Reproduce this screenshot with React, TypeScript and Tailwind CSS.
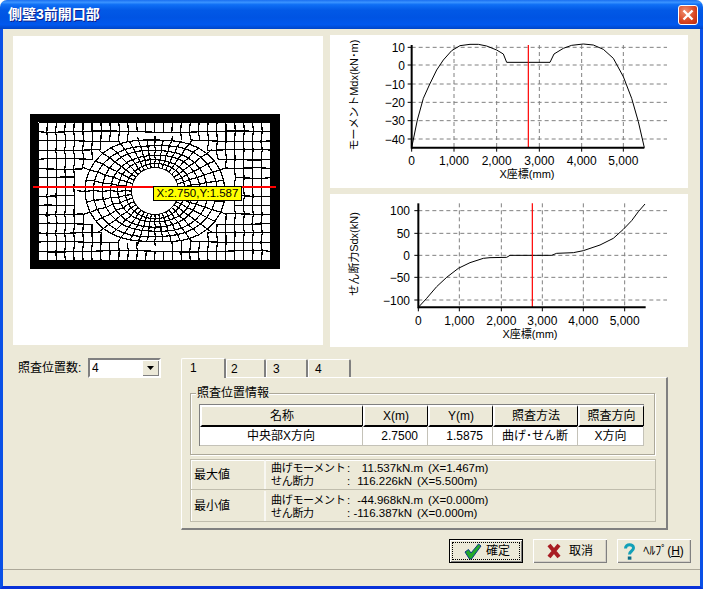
const jit = (a: number, b: number, k: number) => Math.sin(a * 12.9898 + b * 78.233 + k) * 0.7;

const CX = 155;
const CY = 191;
const inEllipse = (x: number, y: number) => ((x - CX) / 80) ** 2 + ((y - CY) / 57) ** 2 < 1;

const buildMesh = () => {
  const segs: string[] = [];
  const cols = 26;
  const rows = 15;
  const node = (i: number, j: number): [number, number] => {
    const e = i === 0 || j === 0 || i === cols || j === rows ? 0 : 1;
    return [38.5 + (i * 232) / cols + e * jit(i, j, 1), 122.5 + (j * 138) / rows + e * jit(i, j, 5)];
  };
  for (let i = 0; i <= cols; i++) {
    for (let j = 0; j <= rows; j++) {
      const a = node(i, j);
      if (i < cols) {
        const b = node(i + 1, j);
        if (!inEllipse((a[0] + b[0]) / 2, (a[1] + b[1]) / 2)) segs.push(`M${a[0]} ${a[1]}L${b[0]} ${b[1]}`);
      }
      if (j < rows) {
        const b = node(i, j + 1);
        if (!inEllipse((a[0] + b[0]) / 2, (a[1] + b[1]) / 2)) segs.push(`M${a[0]} ${a[1]}L${b[0]} ${b[1]}`);
      }
    }
  }
  const spokes = 40;
  const rings = [0, 0.12, 0.25, 0.39, 0.54, 0.7, 0.86, 1];
  const polar = (s: number, r: number): [number, number] => {
    const th = (s / spokes) * Math.PI * 2;
    const out = Math.hypot(78 * Math.cos(th), 55 * Math.sin(th));
    const rad = 23.5 + (out - 23.5) * rings[r];
    const e = r === 0 ? 0 : 0.7;
    return [CX + rad * Math.cos(th) + e * jit(s, r, 2), CY + rad * Math.sin(th) + e * jit(s, r, 7)];
  };
  for (let s = 0; s < spokes; s++) {
    for (let r = 0; r < rings.length - 1; r++) {
      const a = polar(s, r);
      const b = polar(s + 1, r);
      segs.push(`M${a[0]} ${a[1]}L${b[0]} ${b[1]}`);
      // outer ring gets every other spoke so it meets the square cells without clumping
      if (r < rings.length - 2 || s % 2 === 0) {
        const c = polar(s, r + 1);
        segs.push(`M${a[0]} ${a[1]}L${c[0]} ${c[1]}`);
      }
    }
  }
  return segs.join("");
};

const MESH = buildMesh();

const MeshView = () => (
  <svg width="310" height="309" viewBox="13 36 310 309">
    <rect x="30" y="114" width="250" height="155" fill="#000" />
    <rect x="38" y="122" width="233" height="138" fill="#fff" />
    <path d={MESH} fill="none" stroke="#000" strokeWidth="1.2" shapeRendering="crispEdges" />
    <circle cx={CX} cy={CY} r="23" fill="#fff" />
    <rect x="33" y="186" width="243" height="2" fill="#ff0000" />
  </svg>
);

type ChartProps = {
  top: number;
  base: number;
  axisX: number;
  axisY: number;
  axisTop: number;
  axisEnd: number;
  xTicks: number[];
  yTicks: [number, string][];
  redX: number;
  curve: number[][];
  yTitle: string;
  yTitleX: number;
  yLabelX: number;
  xTitleX: number;
  xLabelY: number;
  xTitleY: number;
};

const XLABELS = ["0", "1,000", "2,000", "3,000", "4,000", "5,000"];

// positions are read from the 3x crops, so zx/zy are crop pixels
const Chart = (p: ChartProps) => {
  const X = (zx: number) => 330 + zx / 3;
  const Y = (zy: number) => p.base + zy / 3;
  return (
    <svg width="358" height="153" viewBox={`330 ${p.top} 358 153`} fontSize="12" className="block">
      {p.xTicks.slice(1).map((t) => (
        <line key={t} x1={X(t)} x2={X(t)} y1={Y(p.axisTop)} y2={Y(p.axisY)} stroke="#808080" strokeDasharray="4 3" />
      ))}
      {p.yTicks.map(([t]) => (
        <line key={t} x1={X(p.axisX)} x2={667} y1={Y(t)} y2={Y(t)} stroke="#808080" strokeDasharray="4 3" />
      ))}
      <polyline
        points={p.curve.map(([x, y]) => `${X(x)},${Y(y)}`).join(" ")}
        fill="none"
        stroke="#000"
        strokeWidth="1"
      />
      <line x1={X(p.redX)} x2={X(p.redX)} y1={Y(p.axisTop)} y2={Y(p.axisY)} stroke="#ff0000" strokeWidth="1.2" />
      <line x1={X(p.axisX)} x2={X(p.axisX)} y1={Y(p.axisTop)} y2={Y(p.axisY) + 1} stroke="#000" strokeWidth="2" />
      <line x1={X(p.axisX)} x2={X(p.axisEnd)} y1={Y(p.axisY)} y2={Y(p.axisY)} stroke="#000" strokeWidth="2" />
      {p.yTicks.map(([t, label]) => (
        <g key={label}>
          <line x1={X(p.axisX) - 4} x2={X(p.axisX)} y1={Y(t)} y2={Y(t)} stroke="#000" />
          <text x={p.yLabelX} y={Y(t) + 4.5} textAnchor="end">
            {label}
          </text>
        </g>
      ))}
      {p.xTicks.map((t, i) => (
        <g key={t}>
          <line x1={X(t)} x2={X(t)} y1={Y(p.axisY)} y2={Y(p.axisY) + 4} stroke="#000" />
          <text x={X(t)} y={p.xLabelY} textAnchor="middle">
            {XLABELS[i]}
          </text>
        </g>
      ))}
      <text x={p.xTitleX} y={p.xTitleY} textAnchor="middle" fontSize="11">
        X座標(mm)
      </text>
      <text
        transform={`translate(${p.yTitleX} ${p.top + 60}) rotate(-90)`}
        textAnchor="middle"
        fontSize="11"
      >
        {p.yTitle}
      </text>
    </svg>
  );
};

const MOMENT = [
  [245, 353], [262, 270], [280, 205], [298, 165], [320, 120], [340, 90], [365, 62], [390, 47], [420, 43],
  [445, 43], [470, 48], [500, 60], [520, 72], [530, 97], [660, 97], [672, 72], [700, 55], [725, 46], [760, 42],
  [790, 45], [820, 58], [850, 85], [880, 140], [905, 205], [925, 275], [943, 353],
];

const SHEAR = [
  [265, 352], [290, 325], [320, 290], [350, 262], [385, 235], [420, 218], [460, 205], [480, 203], [530, 202],
  [540, 196], [665, 196], [680, 190], [730, 188], [760, 182], [810, 165], [850, 145], [880, 118], [905, 92],
  [925, 65], [945, 42],
];

const headCell =
  "flex items-center justify-center bg-[#ece9d8] border-t-2 border-l-2 border-t-white border-l-white border-b-2 border-r border-b-black border-r-black";
const bodyCell = "flex items-center border-r border-b border-[#c4c2b8] h-[20px]";

const ResultLine = ({ label, value, pos, short }: { label: string; value: string; pos: string; short?: boolean }) => (
  <div className="flex h-[13px] items-center text-[11.5px] leading-[13px] whitespace-nowrap">
    <span className="w-[75px] text-[11px] tracking-[-0.3px]">{label}</span>
    <span className="w-[5px] text-center">:</span>
    <span className={short ? "w-[61px] text-right" : "w-[72px] text-right"}>{value}</span>
    <span className="ml-[5px]">{pos}</span>
  </div>
);

const ResultRow = ({ title, children, className }: { title: string; children: React.ReactNode; className?: string }) => (
  <div className={`flex h-[31px] ${className ?? ""}`}>
    <div className="flex w-[75px] items-center pl-[3px] border-r-2 border-[#f8f7f2] text-[12px]">{title}</div>
    <div className="flex flex-col justify-center pl-[5px] pt-px">{children}</div>
  </div>
);

const DialogButton = ({ children, primary }: { children: React.ReactNode; primary?: boolean }) => (
  <button
    className={`flex h-[24px] w-[74px] items-center justify-center gap-[4px] bg-[#ece9d8] text-[12px] ${
      primary
        ? "border border-black shadow-[inset_1px_1px_0_#fff,inset_-1px_-1px_0_#808080] outline-1 outline-dotted outline-black -outline-offset-[4px]"
        : "shadow-[inset_1px_1px_0_#fff,inset_-1px_-1px_0_#808080,inset_-2px_-2px_0_#d4d0c8]"
    }`}
  >
    {children}
  </button>
);

export default function App() {
  return (
    <div className="flex h-[589px] w-[703px] flex-col overflow-hidden rounded-t-[7px] bg-[#ece9d8] font-['Liberation_Sans','Noto_Sans_CJK_JP',sans-serif] text-black">
      {/* title bar */}
      <div className="flex h-[29px] shrink-0 items-center justify-between bg-[linear-gradient(180deg,#1a6ff0_0%,#3a93ff_8%,#0f6ff5_16%,#0259e6_35%,#0054e3_60%,#0058ee_85%,#0045c8_100%)] pl-[8px] pr-[5px]">
        <span className="text-[14px] font-bold text-white [text-shadow:1px_1px_0_#0f1f89]">側壁3前開口部</span>
        <div className="flex h-[20px] w-[20px] items-center justify-center rounded-[3px] border border-white bg-[radial-gradient(circle_at_35%_30%,#f09070,#d8431f_60%,#b82a10)]">
          <svg width="12" height="12" viewBox="0 0 12 12">
            <path d="M1.5 1.5L10.5 10.5M10.5 1.5L1.5 10.5" stroke="#fff" strokeWidth="2.4" />
          </svg>
        </div>
      </div>

      {/* client area */}
      <div className="flex min-h-0 flex-1 flex-col border-x-[3px] border-b-[3px] border-x-[#0a50e6] border-b-[#0831d9]">
        <div className="flex gap-[7px] pl-[10px] pt-[6px]">
          <div className="relative mt-px h-[309px] w-[310px] bg-white">
            <MeshView />
            <div className="absolute left-[140px] top-[150px] flex h-[15px] w-[89px] items-center justify-center border border-black bg-[#ffff00] text-[11.5px] leading-none whitespace-nowrap">
              X:2.750,Y:1.587
            </div>
          </div>
          <div className="flex w-[358px] flex-col gap-[6px]">
            <div className="h-[153px] bg-white">
              <Chart
                top={35}
                base={30}
                axisX={245}
                axisY={353}
                axisTop={45}
                axisEnd={943}
                xTicks={[245, 372, 500, 628, 755, 880]}
                yTicks={[[52, "10"], [105, "0"], [162, "−10"], [217, "−20"], [272, "−30"], [327, "−40"]]}
                redX={595}
                curve={MOMENT}
                yTitle="モーメントMdx(kN･m)"
                yTitleX={358}
                yLabelX={405}
                xTitleX={527}
                xLabelY={165}
                xTitleY={178}
              />
            </div>
            <div className="h-[153px] bg-white">
              <Chart
                top={194}
                base={190}
                axisX={265}
                axisY={352}
                axisTop={40}
                axisEnd={947}
                xTicks={[265, 388, 514, 637, 760, 884]}
                yTicks={[[62, "100"], [130, "50"], [196, "0"], [262, "−50"], [330, "−100"]]}
                redX={607}
                curve={SHEAR}
                yTitle="せん断力Sdx(kN)"
                yTitleX={358}
                yLabelX={410}
                xTitleX={530}
                xLabelY={325}
                xTitleY={338}
              />
            </div>
          </div>
        </div>

        <div className="flex pt-[11px]">
          {/* check position count */}
          <div className="flex h-[20px] w-[178px] items-center pl-[15px] text-[12px]">
            <span className="w-[70px]">照査位置数:</span>
            <div className="flex h-[20px] w-[73px] items-center justify-between border-2 border-t-[#808080] border-l-[#808080] border-b-white border-r-white bg-white pl-[2px]">
              <span>4</span>
              <div className="flex h-[16px] w-[17px] items-center justify-center bg-[#ece9d8] shadow-[inset_1px_1px_0_#fff,inset_-1px_-1px_0_#808080]">
                <svg width="7" height="4" viewBox="0 0 7 4">
                  <path d="M0 0H7L3.5 4Z" fill="#000" />
                </svg>
              </div>
            </div>
          </div>

          {/* tabs */}
          <div className="flex w-[487px] flex-col">
            <div className="flex h-[19px] items-end text-[12px]">
              <div className="relative z-10 -mb-px flex h-[20px] w-[45px] items-start rounded-t-[2px] border-l border-r-2 border-t border-l-white border-r-[#808080] border-t-white bg-[#ece9d8] pl-[8px]">
                1
              </div>
              <div className="flex h-[18px] w-[40px] items-center rounded-t-[2px] border-l border-r-2 border-t border-l-white border-r-[#808080] border-t-white pl-[4px]">2</div>
              <div className="flex h-[18px] w-[42px] items-center rounded-t-[2px] border-l border-r-2 border-t border-l-white border-r-[#808080] border-t-white pl-[6px]">3</div>
              <div className="flex h-[18px] w-[43px] items-center rounded-t-[2px] border-l border-r-2 border-t border-l-white border-r-[#808080] border-t-white pl-[6px]">4</div>
            </div>
            <div className="h-[153px] border-l border-t border-l-white border-t-white border-b-2 border-r-2 border-b-[#808080] border-r-[#808080] pl-[8px] pt-[8px] text-[12px]">
              <fieldset className="h-[69px] w-[465px] border border-[#aca899] pl-[8px] shadow-[inset_1px_1px_0_#fff,1px_1px_0_#fff]">
                <legend className="ml-[-3px] h-[14px] bg-[#ece9d8] pl-px text-[12px] leading-[14px]">照査位置情報</legend>
                <div className="mt-[4px] w-[445px] border-l border-t border-[#808080]">
                  <div className="grid h-[21px] grid-cols-[163px_65px_65px_85px_66px]">
                    <div className={headCell}>名称</div>
                    <div className={headCell}>X(m)</div>
                    <div className={headCell}>Y(m)</div>
                    <div className={headCell}>照査方法</div>
                    <div className={headCell}>照査方向</div>
                  </div>
                  <div className="grid h-[20px] grid-cols-[163px_65px_65px_85px_66px] bg-white">
                    <div className={`${bodyCell} justify-center`}>中央部X方向</div>
                    <div className={`${bodyCell} justify-end pr-[9px]`}>2.7500</div>
                    <div className={`${bodyCell} justify-end pr-[9px]`}>1.5875</div>
                    <div className={`${bodyCell} justify-center`}>曲げ･せん断</div>
                    <div className={`${bodyCell} justify-center`}>X方向</div>
                  </div>
                </div>
              </fieldset>
              <div className="mt-[4px] flex h-[63px] w-[466px] flex-col gap-px border border-[#c0bdad] shadow-[inset_1px_1px_0_#fff]">
                <ResultRow title="最大値" className="border-b border-[#c0bdad]">
                  <ResultLine label="曲げモーメント" value="11.537kN.m" pos="(X=1.467m)" />
                  <ResultLine label="せん断力" value="116.226kN" pos="(X=5.500m)" short />
                </ResultRow>
                <ResultRow title="最小値">
                  <ResultLine label="曲げモーメント" value="-44.968kN.m" pos="(X=0.000m)" />
                  <ResultLine label="せん断力" value="-116.387kN" pos="(X=0.000m)" short />
                </ResultRow>
              </div>
            </div>
          </div>
        </div>

        {/* buttons */}
        <div className="flex justify-end gap-[10px] pr-[9px] pt-[9px]">
          <DialogButton primary>
            <svg width="18" height="17" viewBox="0 0 18 17" className="ml-[2px]">
              <path d="M1 9L4.5 6.5L7 10L14.5 1L17 3L7.5 16H5.5Z" fill="#22a82a" stroke="#0b3a8a" strokeWidth="1" />
            </svg>
            確定
          </DialogButton>
          <DialogButton>
            <svg width="14" height="16" viewBox="0 0 14 16">
              <path d="M2 2L12 14M12 2L2 14" stroke="#a81c22" strokeWidth="4" />
            </svg>
            <span className="ml-[4px]">取消</span>
          </DialogButton>
          <DialogButton>
            <svg width="11" height="17" viewBox="0 0 11 17">
              <path d="M1.5 5.5C1.5 0.5 9.5 0.5 9.5 5C9.5 8 5.5 8 5.5 11.5" fill="none" stroke="#12a0b8" strokeWidth="3" />
              <rect x="3.8" y="13.5" width="3.6" height="3.2" fill="#0a6c86" />
            </svg>
            <span className="ml-[4px] text-[12px] whitespace-nowrap">
              ﾍﾙﾌﾟ(<span className="underline">H</span>)
            </span>
          </DialogButton>
        </div>

        {/* status bar */}
        <div className="mt-[6px] border-t border-t-[#aca899] shadow-[inset_0_1px_0_#fff]" />
      </div>
    </div>
  );
}
